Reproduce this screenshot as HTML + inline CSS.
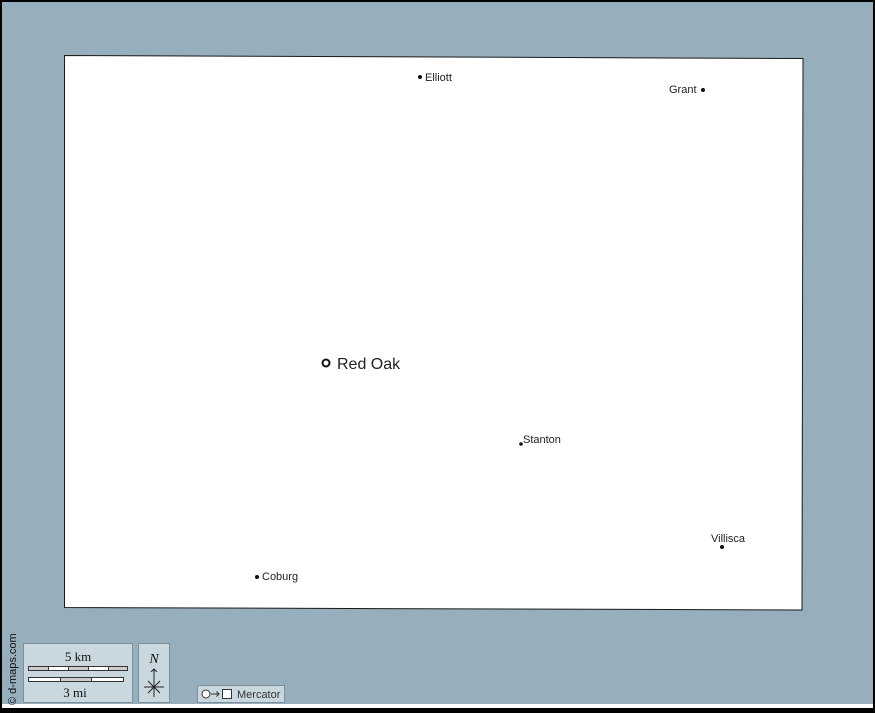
<!DOCTYPE html>
<html><head><style>
html,body{margin:0;padding:0;width:875px;height:713px;overflow:hidden;background:#000}
svg{display:block}
text{font-family:"Liberation Sans",sans-serif}
</style></head><body>
<svg width="875" height="713" viewBox="0 0 875 713">
<rect x="0" y="0" width="875" height="713" fill="#000"/>
<rect x="2" y="2" width="871" height="702" fill="#97aebd"/>
<rect x="2" y="704" width="871" height="4" fill="#fff"/>
<polygon points="64.5,55.5 803,58.5 802,610 64.5,607.5" fill="#fff" stroke="#1a1a1a" stroke-width="1"/>
<g font-size="11" fill="#222">
<circle cx="420" cy="77" r="2" fill="#111"/><text x="425" y="81">Elliott</text>
<circle cx="703" cy="90" r="2" fill="#111"/><text x="669" y="93">Grant</text>
<circle cx="521" cy="444" r="1.8" fill="#111"/><text x="523" y="443">Stanton</text>
<circle cx="722" cy="547" r="2" fill="#111"/><text x="711" y="542">Villisca</text>
<circle cx="257" cy="577" r="2" fill="#111"/><text x="262" y="580">Coburg</text>
</g>
<circle cx="326" cy="363" r="3.5" fill="#fff" stroke="#111" stroke-width="2"/>
<text x="337" y="369" font-size="16" fill="#222">Red Oak</text>
<text transform="translate(16,705) rotate(-90)" font-size="11" fill="#111">© d-maps.com</text>
<rect x="23.5" y="643.5" width="109" height="59" fill="#c9d7df" stroke="#7d8f9a"/>
<text x="78" y="661" font-size="13" text-anchor="middle" fill="#111" style="font-family:'Liberation Serif',serif">5 km</text>
<rect x="28.5" y="666.5" width="99" height="4" fill="#fff" stroke="#333"/>
<rect x="28.5" y="666.5" width="20" height="4" fill="#ccc" stroke="#333"/>
<rect x="68.5" y="666.5" width="20" height="4" fill="#ccc" stroke="#333"/>
<rect x="108.5" y="666.5" width="19" height="4" fill="#ccc" stroke="#333"/>
<rect x="28.5" y="677.5" width="95" height="4" fill="#fff" stroke="#333"/>
<rect x="60.5" y="677.5" width="31" height="4" fill="#ccc" stroke="#333"/>
<text x="75" y="697" font-size="13" text-anchor="middle" fill="#111" style="font-family:'Liberation Serif',serif">3 mi</text>
<rect x="138.5" y="643.5" width="31" height="59" fill="#c9d7df" stroke="#7d8f9a"/>
<text x="154" y="663" font-size="14" font-style="italic" text-anchor="middle" fill="#111" style="font-family:'Liberation Serif',serif">N</text>
<g stroke="#222" stroke-width="1" fill="none">
<path d="M154 669V697M144 687H164M148 681L160 693M160 681L148 693M151 672L154 669L157 672"/>
</g>
<rect x="197.5" y="685.5" width="87" height="17" fill="#c9d7df" stroke="#7d8f9a"/>
<circle cx="206" cy="694" r="4" fill="#fff" stroke="#333"/>
<path d="M211 694H219M216.5 691.5L219 694L216.5 696.5" stroke="#333" fill="none"/>
<rect x="222.5" y="689.5" width="9" height="9" fill="#fff" stroke="#333"/>
<text x="237" y="698" font-size="11" fill="#333">Mercator</text>
</svg>
</body></html>
